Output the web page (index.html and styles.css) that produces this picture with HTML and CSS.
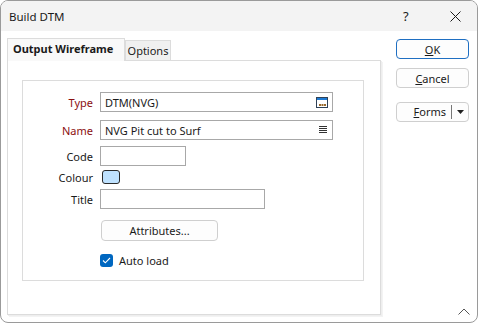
FILE: index.html
```html
<!DOCTYPE html>
<html lang="en">
<head>
  <meta charset="UTF-8" />
  <title>Build DTM</title>
  <link rel="stylesheet" href="styles.css">
</head>
<body>
  <div class="window">
    <div class="titlebar">
      <span class="title">Build DTM</span>
      <span class="help">?</span>
      <span class="close">
        <svg width="11" height="11" viewBox="0 0 11 11"><path d="M0.5 0.5L10.5 10.5M10.5 0.5L0.5 10.5" stroke="#1a1a1a" stroke-width="1" fill="none"/></svg>
      </span>
    </div>

    <div class="content">
      <div class="tabs-area">
        <div class="tab-strip">
          <div class="tab active">Output Wireframe</div>
          <div class="tab">Options</div>
        </div>
        <div class="panel">
          <div class="group">
            <div class="row row-type">
              <label class="req">Type</label>
              <div class="input wide">
                <span>DTM(NVG)</span>
                <svg class="icon" width="12" height="11" viewBox="0 0 12 11">
                  <rect x="0.5" y="0.5" width="11" height="10" fill="#fff" stroke="#2f4156"/>
                  <rect x="1" y="1" width="10" height="2" fill="#1e7bd4"/>
                  <rect x="3" y="7" width="2" height="2" fill="#9a6a2c"/>
                  <rect x="5.5" y="7" width="2" height="2" fill="#9a6a2c"/>
                  <rect x="8" y="7" width="2" height="2" fill="#9a6a2c"/>
                </svg>
              </div>
            </div>
            <div class="row row-name">
              <label class="req">Name</label>
              <div class="input wide">
                <span>NVG Pit cut to Surf</span>
                <svg class="icon" width="9" height="8" viewBox="0 0 9 8">
                  <path d="M0 0.5H8M0 2.5H8M0 4.5H8M0 6.5H8" stroke="#333" stroke-width="1"/>
                </svg>
              </div>
            </div>
            <div class="row row-code">
              <label>Code</label>
              <div class="input code"></div>
            </div>
            <div class="row row-colour">
              <label>Colour</label>
              <div class="swatch"></div>
            </div>
            <div class="row row-title">
              <label>Title</label>
              <div class="input title-input"></div>
            </div>
            <div class="row row-attr">
              <label></label>
              <button class="btn attr">Attributes...</button>
            </div>
            <div class="row row-check">
              <label></label>
              <span class="checkbox">
                <svg width="9" height="7" viewBox="0 0 9 7"><path d="M1 3.5L3.3 5.8L8 1" stroke="#fff" stroke-width="1.1" fill="none"/></svg>
              </span>
              <span class="check-label">Auto load</span>
            </div>
          </div>
        </div>
      </div>

      <div class="side">
        <button class="btn side-btn default"><u>O</u>K</button>
        <button class="btn side-btn"><u>C</u>ancel</button>
        <div class="btn side-btn split">
          <span class="split-main"><u>F</u>orms</span>
          <span class="split-arrow">
            <svg width="7" height="4" viewBox="0 0 7 4"><path d="M0 0H7L3.5 4Z" fill="#222"/></svg>
          </span>
        </div>
      </div>
    </div>

    <svg class="grip" width="12" height="7" viewBox="0 0 12 7"><path d="M0.5 6.5L6 1L11.5 6.5" stroke="#555" stroke-width="1" fill="none"/></svg>
  </div>
</body>
</html>
```

FILE: styles.css
```css
* {
  margin: 0;
  padding: 0;
  box-sizing: border-box;
}

body {
  font-family: 'Noto Sans', 'Open Sans', sans-serif;
  font-size: 11px;
  color: #1a1a1a;
  background: #ffffff;
}

.window {
  position: relative;
  width: 478px;
  height: 323px;
  border: 1px solid #9a9a9a;
  border-radius: 8px;
  overflow: hidden;
  background: #ffffff;
  display: flex;
  flex-direction: column;
}

.titlebar {
  height: 30px;
  background: #f3f3f3;
  display: flex;
  align-items: center;
  padding-left: 8px;
  flex-shrink: 0;
}

.title {
  flex: 1;
  font-size: 11.5px;
}

.help {
  width: 12px;
  font-size: 13px;
  margin-right: 35px;
}

.close {
  display: flex;
  margin-right: 16px;
}

.content {
  flex: 1;
  display: flex;
}

.tabs-area {
  width: 374px;
  margin-left: 6px;
  padding-top: 7px;
  display: flex;
  flex-direction: column;
}

.tab-strip {
  display: flex;
  align-items: flex-end;
  height: 22px;
  position: relative;
  z-index: 1;
}

.tab {
  height: 20px;
  width: 46px;
  border: 1px solid #dcdcdc;
  border-bottom: none;
  background: #f0f0f0;
  line-height: 19px;
  text-align: center;
  white-space: nowrap;
}

.tab.active {
  height: 23px;
  margin-bottom: -1px;
  width: 118px;
  padding-left: 5px;
  text-align: left;
  font-weight: bold;
  background: #f9f9f9;
  line-height: 20px;
}

.panel {
  height: 255px;
  border: 1px solid #dcdcdc;
  box-shadow: 1px 1px 0 #eeeeee, 2px 2px 0 #f3f3f3;
  padding: 19px 15px 0 14px;
  background: #ffffff;
}

.group {
  width: 342px;
  height: 201px;
  border: 1px solid #dcdcdc;
  padding-top: 11px;
}

.row {
  display: flex;
  align-items: center;
}

.row label {
  width: 70px;
  margin-right: 7px;
  text-align: right;
  flex-shrink: 0;
}

.req {
  color: #8b1010;
}

.row-name { margin-top: 8px; }
.row-code { margin-top: 6px; }
.row-colour { margin-top: 4px; height: 14px; }
.row-title { margin-top: 5px; }
.row-attr { margin-top: 11px; }
.row-check { margin-top: 13px; height: 13px; }

.input {
  height: 20px;
  border: 1px solid #a8a8a8;
  display: flex;
  align-items: center;
  padding-left: 4px;
  background: #ffffff;
}

.input.wide {
  width: 233px;
  justify-content: space-between;
  padding-right: 4px;
}

.input.code {
  width: 86px;
}

.input.title-input {
  width: 165px;
}

.swatch {
  width: 18px;
  height: 14px;
  margin-left: 2px;
  border: 1px solid #2a2a2a;
  border-radius: 3px;
  background: #bfe2ff;
}

.btn {
  font-family: inherit;
  font-size: 11px;
  color: #1a1a1a;
  background: #fdfdfd;
  border: 1px solid #cfcfcf;
  border-radius: 4px;
}

.attr {
  width: 117px;
  height: 21px;
  margin-left: 1px;
}

.checkbox {
  width: 13px;
  height: 13px;
  border-radius: 3px;
  background: #0067c0;
  display: flex;
  align-items: center;
  justify-content: center;
}

.check-label {
  margin-left: 6px;
}

.side {
  margin-left: 15px;
  padding-top: 8px;
  display: flex;
  flex-direction: column;
}

.side-btn {
  width: 73px;
  height: 20px;
  margin-bottom: 9px;
  text-align: center;
}

.side-btn.default {
  border-color: #1f6fc2;
}

.split {
  margin-top: 5px;
  display: flex;
  align-items: center;
}

.split-main {
  flex: 1;
  text-align: right;
  padding-right: 5px;
  border-right: 1px solid #777;
  line-height: 14px;
}

.split-arrow {
  width: 16px;
  display: flex;
  justify-content: center;
}

.grip {
  position: absolute;
  right: 7px;
  bottom: 7px;
}
```
